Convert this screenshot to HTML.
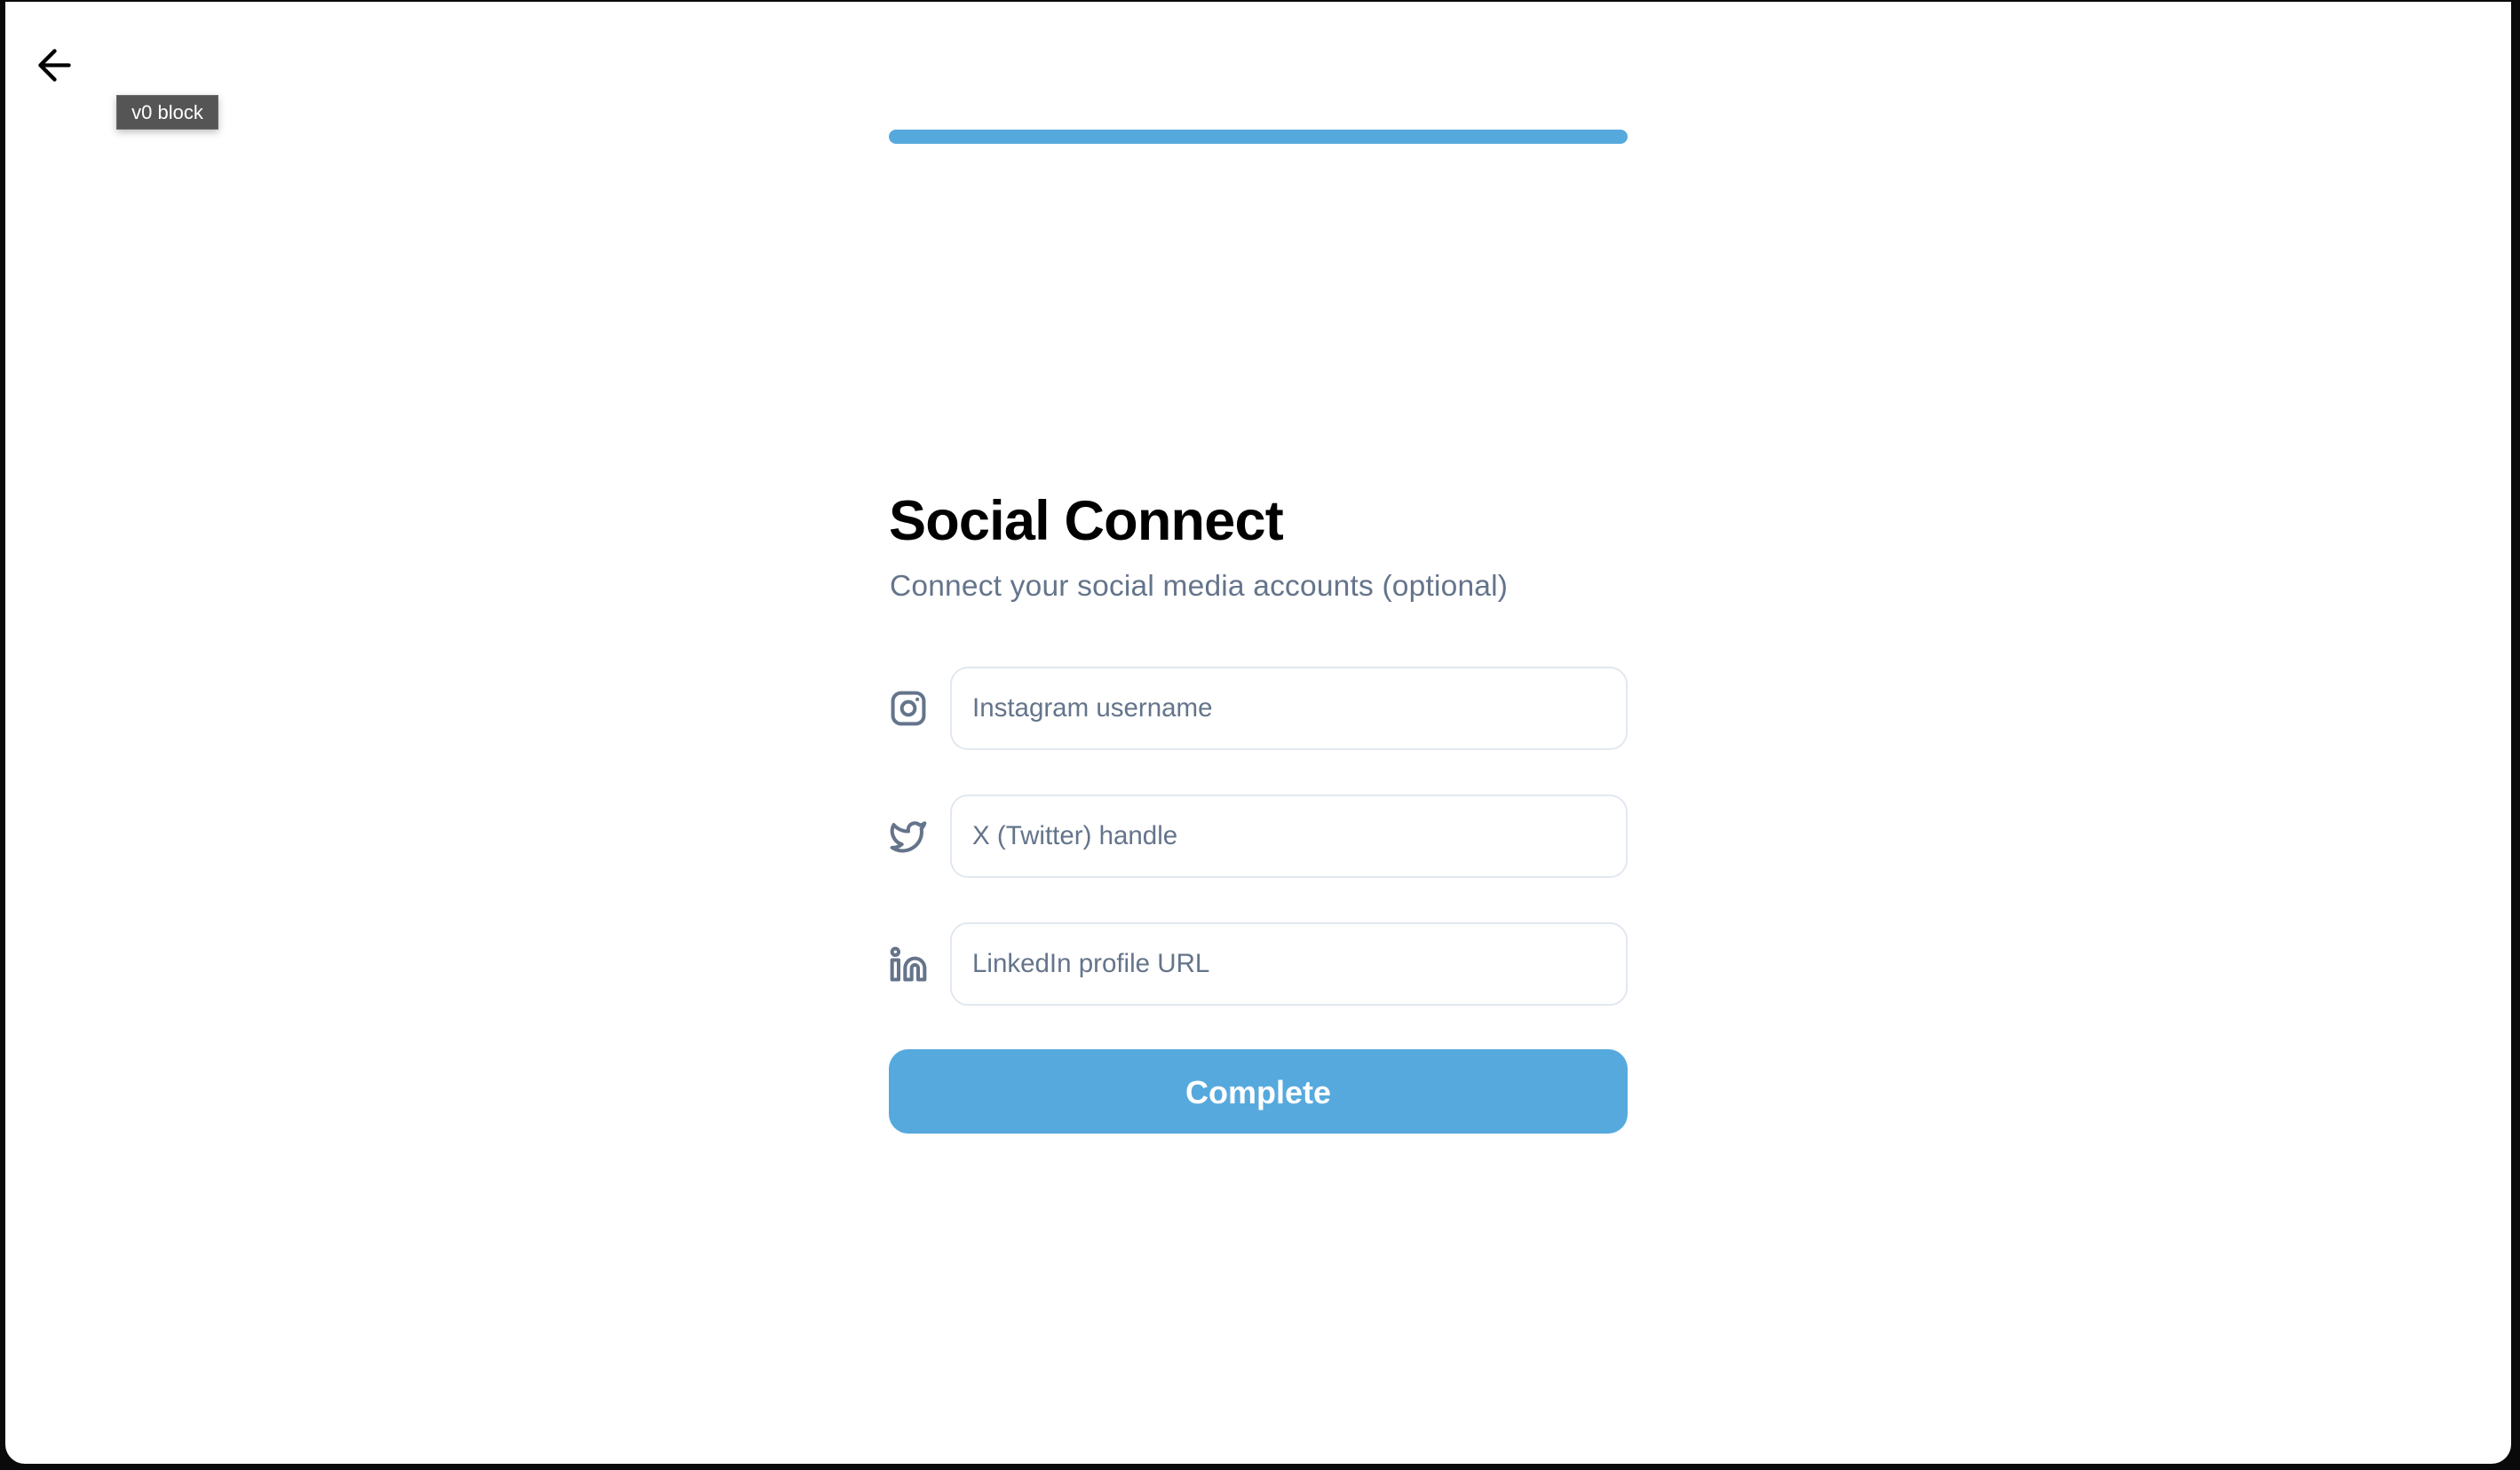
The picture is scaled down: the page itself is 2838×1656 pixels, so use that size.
<!DOCTYPE html>
<html><head><meta charset="utf-8"><style>
html,body{margin:0;padding:0;width:2838px;height:1656px;background:#0a0a0a;overflow:hidden;font-family:"Liberation Sans",Arial,sans-serif;}
.panel{position:absolute;left:6px;top:2px;width:2822px;height:1647px;background:#fff;border-radius:0 0 22px 22px;}
.abs{position:absolute;}
.tip{left:131px;top:107px;width:115px;height:39px;background:#555;border:1px solid #6a6a6a;box-sizing:border-box;color:#fff;font-size:22px;line-height:37px;text-align:center;box-shadow:0 3px 8px rgba(0,0,0,.25);}
.bar{left:1001px;top:146px;width:832px;height:16px;background:#56a9dd;border-radius:8px;}
h1{position:absolute;left:1001px;top:549px;margin:0;font-size:63px;line-height:76px;font-weight:700;color:#000;letter-spacing:-0.8px;}
.sub{left:1002px;top:640px;font-size:33.5px;line-height:42px;color:#64748b;letter-spacing:0.2px;}
.inp{left:1070px;width:763px;height:94px;box-sizing:border-box;border:2px solid #e2e8f0;border-radius:20px;color:#64748b;font-size:29.5px;line-height:90px;padding-left:23px;}
.ic{left:1001px;width:44px;height:44px;}
.btn{left:1001px;top:1182px;width:832px;height:95px;background:#56a9dd;border-radius:22px;color:#fff;font-size:36px;font-weight:700;text-align:center;line-height:97px;}
</style></head><body>
<div class="panel"></div>
<svg class="abs" style="left:34px;top:46px" width="55" height="55" viewBox="0 0 24 24" fill="none" stroke="#000" stroke-width="1.9" stroke-linecap="round" stroke-linejoin="round"><path d="M12 19l-7-7 7-7M19 12H5"/></svg>
<div class="abs tip">v0 block</div>
<div class="abs bar"></div>
<h1>Social Connect</h1>
<div class="abs sub">Connect your social media accounts (optional)</div>

<svg class="abs ic" style="top:776px" viewBox="0 0 24 24" fill="none" stroke="#64748b" stroke-width="2.2" stroke-linecap="round" stroke-linejoin="round"><rect x="2.5" y="2.5" width="19" height="19" rx="5"/><circle cx="12" cy="12" r="4"/><path d="M17.5 6.5h.01"/></svg>
<div class="abs inp" style="top:751px">Instagram username</div>

<svg class="abs ic" style="top:920px" viewBox="0 0 24 24" fill="none" stroke="#64748b" stroke-width="2.2" stroke-linecap="round" stroke-linejoin="round"><path d="M22 4s-.7 2.1-2 3.4c1.6 10-9.4 17.3-18 11.6 2.2.1 4.4-.6 6-2C3 15.5.5 9.6 3 5c2.2 2.6 5.6 4.1 9 4-.9-4.2 4-6.6 7-3.8 1.1 0 3-1.2 3-1.2z"/></svg>
<div class="abs inp" style="top:895px">X (Twitter) handle</div>

<svg class="abs ic" style="top:1065px" viewBox="0 0 24 24" fill="none" stroke="#64748b" stroke-width="2.2" stroke-linecap="round" stroke-linejoin="round"><path d="M16 8a6 6 0 0 1 6 6v7h-4v-7a2 2 0 0 0-2-2 2 2 0 0 0-2 2v7h-4v-7a6 6 0 0 1 6-6z"/><rect x="2" y="9" width="4" height="12"/><circle cx="4" cy="4" r="2"/></svg>
<div class="abs inp" style="top:1039px">LinkedIn profile URL</div>

<div class="abs btn">Complete</div>
</body></html>
